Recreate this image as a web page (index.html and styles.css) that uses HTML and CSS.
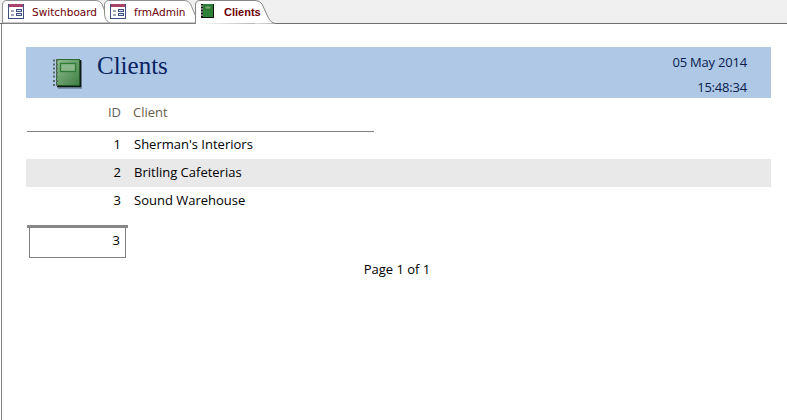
FILE: index.html
```html
<!DOCTYPE html>
<html lang="en">
<head>
<meta charset="utf-8">
<title>Clients</title>
<link rel="stylesheet" href="styles.css">
</head>
<body>
<svg width="0" height="0" class="defs">
  <defs>
    <linearGradient id="book" x1="0" y1="0" x2="1" y2="1">
      <stop offset="0" stop-color="#8fbb8f"/>
      <stop offset="1" stop-color="#3f7f43"/>
    </linearGradient>
    <symbol id="form" viewBox="0 0 16 15">
      <rect x="0.5" y="0.5" width="15" height="14" fill="#fff" stroke="#3f4f7f"/>
      <rect x="1" y="0" width="14" height="3" fill="#a8446c"/>
      <path d="M3 7h3M3 11h3" stroke="#3f4f7f" fill="none"/>
      <rect x="8.5" y="5.5" width="5" height="2" fill="#dbe6f5" stroke="#3f4f7f"/>
      <rect x="8.5" y="9.5" width="5" height="2" fill="#dbe6f5" stroke="#3f4f7f"/>
    </symbol>
  </defs>
</svg>
<nav class="tabs">
  <div class="tab tab-first">
    <svg class="tab-shape" width="112" height="24" viewBox="0 0 112 24"><path d="M2.500 23V5Q2.500 .5 7 .5H96Q100 .5 102 4L107 17Q108.500 22 111 23Z" fill="#fff" stroke="#8f8f8f"/></svg>
    <svg class="tab-icon" width="16" height="15"><use href="#form"/></svg>
    <span class="tab-label">Switchboard</span>
  </div>
  <div class="tab tab-second">
    <svg class="tab-shape" width="96" height="24" viewBox="0 0 96 24"><path d="M6 23Q1 21 .5 14V5Q.5 .5 5 .5H80Q85 .5 87 5L92 17Q93 21 96 23Z" fill="#fff" stroke="#8f8f8f"/></svg>
    <svg class="tab-icon" width="16" height="15"><use href="#form"/></svg>
    <span class="tab-label">frmAdmin</span>
  </div>
  <div class="tab tab-active">
    <svg class="tab-shape" width="82" height="24" viewBox="0 0 82 24"><path d="M.5 24V5Q.5 .5 5 .5H60Q65 .5 67 4L73 17Q76 23.500 81 23.500" fill="#fff" stroke="#858585"/></svg>
    <svg class="tab-icon" width="13" height="14" viewBox="0 0 13 14"><rect width="13" height="14" fill="#111"/><rect x="2" y="0" width="10" height="13" fill="#2f8038"/><rect x="4" y="2" width="6" height="3" fill="#6fae70" stroke="#1d5a24" stroke-width=".6"/><path d="M0 2h2M0 5h2M0 8h2M0 11h2" stroke="#ddd"/></svg>
    <span class="tab-label tab-label-active">Clients</span>
  </div>
</nav>
<main class="pane">
  <section class="report">
    <header class="report-head">
      <svg class="logo" width="30" height="31" viewBox="0 0 30 31">
        <rect x="6" y="3" width="24" height="28" fill="#33475f" opacity=".4"/>
        <rect x="4.500" y="1.500" width="23" height="26" fill="url(#book)" stroke="#2c6b30"/>
        <path d="M5 28.500H28.500V2" fill="none" stroke="#0c1a0e" stroke-width="1.500"/>
        <rect x="8.500" y="5.500" width="15" height="8" fill="#8ab78a" stroke="#2f7a35" stroke-width="1.300"/>
        <path d="M1 2.500h5M1 6.500h5M1 10.500h5M1 14.500h5M1 18.500h5M1 23h5M1 27h5" stroke="#5c6a66" stroke-width="2" stroke-dasharray="2 1"/>
      </svg>
      <h1 class="title">Clients</h1>
      <div class="stamp">
        <span>05 May 2014</span>
        <span>15:48:34</span>
      </div>
    </header>
    <div class="columns">
      <span class="id-cell id-head">ID</span>
      <span class="name-head">Client</span>
    </div>
    <div class="row row-first"><span class="id-cell">1</span><span class="name-cell">Sherman's Interiors</span></div>
    <div class="row row-alt"><span class="id-cell">2</span><span class="name-cell">Britling Cafeterias</span></div>
    <div class="row"><span class="id-cell">3</span><span class="name-cell">Sound Warehouse</span></div>
    <div class="total-bar"></div>
    <div class="total-box">3</div>
    <div class="page-no">Page 1 of 1</div>
  </section>
</main>
</body>
</html>
```
FILE: styles.css
```css
* { box-sizing: border-box; }
html, body { margin: 0; padding: 0; }
body {
  width: 787px;
  height: 420px;
  overflow: hidden;
  background: #fff;
  font-family: "Open Sans", "Noto Sans", sans-serif;
  font-size: 13px;
  color: #000;
  display: flex;
  flex-direction: column;
}
.defs { position: absolute; }
.tabs {
  height: 24px;
  background: #f0f0f0;
  border-bottom: 1px solid #6e6e6e;
  display: flex;
  flex: none;
}
.tab { position: relative; height: 23px; flex: none; display: flex; align-items: flex-start; }
.tab-shape { position: absolute; left: 0; top: 0; }
.tab-first { width: 104px; padding: 4px 0 0 8px; }
.tab-second { width: 91px; padding: 4px 0 0 6px; z-index: 1; }
.tab-active { width: 80px; height: 24px; padding: 4px 0 0 6px; z-index: 2; }
.tab-icon { position: relative; flex: none; }
.tab-label {
  position: relative;
  margin-left: 8px;
  font-family: "DejaVu Sans", sans-serif;
  font-size: 10.5px;
  line-height: 16px;
  color: #6e0008;
}
.tab-label-active {
  font-weight: 700;
  font-family: "Liberation Sans", sans-serif;
  font-size: 11px;
  margin-left: 10px;
}
.pane {
  flex: 1;
  margin-left: 1px;
  border-left: 1px solid #808080;
  padding: 23px 16px 0 24px;
}
.report { width: 745px; }
.report-head {
  height: 51px;
  background: #aec8e6;
  display: flex;
  align-items: flex-start;
  padding-left: 26px;
}
.logo { margin-top: 11px; flex: none; }
.title {
  margin: 3px 0 0 15px;
  font-family: "Liberation Serif", serif;
  font-weight: 400;
  font-size: 25px;
  line-height: 32px;
  color: #08225f;
}
.stamp {
  margin-left: auto;
  margin-right: 24px;
  padding-top: 6px;
  display: flex;
  flex-direction: column;
  align-items: flex-end;
  gap: 7px;
  line-height: 18px;
  letter-spacing: -0.2px;
  color: #0a1c4e;
}
.columns {
  margin-left: 1px;
  width: 347px;
  height: 34px;
  border-bottom: 1px solid #808080;
  display: flex;
  align-items: flex-start;
  padding-top: 5px;
  line-height: 18px;
}
.id-cell { width: 94px; text-align: right; flex: none; }
.id-head { color: #5f5f5f; }
.name-head { margin-left: 12px; color: #6a5a4a; }
.row {
  height: 28px;
  display: flex;
  align-items: center;
  padding: 0 0 2px 1px;
}
.row-first { height: 27px; padding-bottom: 3px; }
.row-alt { background: #e9e9e9; }
.name-cell { margin-left: 13px; }
.total-bar {
  margin: 10px 0 0 1px;
  width: 101px;
  height: 3px;
  background: #888;
}
.total-box {
  margin-left: 3px;
  width: 97px;
  height: 30px;
  border: 1px solid #808080;
  border-top: 0;
  text-align: right;
  padding: 3px 5px 0 0;
  line-height: 18px;
}
.page-no { margin-top: 2px; text-align: center; line-height: 18px; padding-right: 3px; }
```
